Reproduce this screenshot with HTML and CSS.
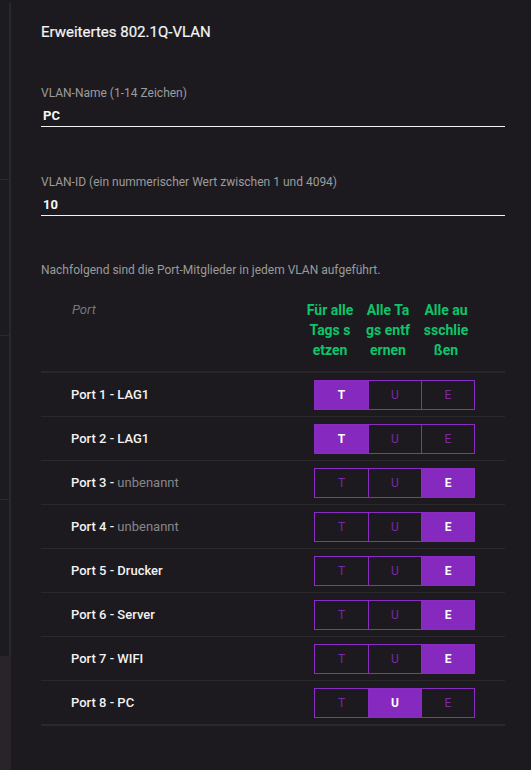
FILE: index.html
```html
<!DOCTYPE html>
<html lang="de">
<head>
<meta charset="utf-8">
<title>Erweitertes 802.1Q-VLAN</title>
<link rel="stylesheet" href="styles.css">
</head>
<body>
<div class="layout">
  <aside class="strip">
    <div class="strip-seg s1"></div>
    <div class="strip-seg s2"></div>
    <div class="strip-seg s3"></div>
    <div class="strip-seg s4"></div>
    <div class="strip-seg s5"></div>
  </aside>
  <main class="panel">
    <h1 class="title">Erweitertes 802.1Q-VLAN</h1>

    <div class="field first">
      <div class="label">VLAN-Name (1-14 Zeichen)</div>
      <div class="value">PC</div>
    </div>

    <div class="field second">
      <div class="label">VLAN-ID (ein nummerischer Wert zwischen 1 und 4094)</div>
      <div class="value">10</div>
    </div>

    <p class="note">Nachfolgend sind die Port-Mitglieder in jedem VLAN aufgeführt.</p>

    <div class="table">
      <div class="thead">
        <div class="th-port">Port</div>
        <div class="th-act">Für alle<br>Tags s<br>etzen</div>
        <div class="th-act">Alle Ta<br>gs entf<br>ernen</div>
        <div class="th-act">Alle au<br>sschlie<br>ßen</div>
      </div>

      <div class="row">
        <div class="pname">Port 1 - LAG1</div>
        <div class="seg"><span class="opt on">T</span><span class="opt">U</span><span class="opt">E</span></div>
      </div>
      <div class="row">
        <div class="pname">Port 2 - LAG1</div>
        <div class="seg"><span class="opt on">T</span><span class="opt">U</span><span class="opt">E</span></div>
      </div>
      <div class="row">
        <div class="pname">Port 3 - <span class="unnamed">unbenannt</span></div>
        <div class="seg"><span class="opt">T</span><span class="opt">U</span><span class="opt on">E</span></div>
      </div>
      <div class="row">
        <div class="pname">Port 4 - <span class="unnamed">unbenannt</span></div>
        <div class="seg"><span class="opt">T</span><span class="opt">U</span><span class="opt on">E</span></div>
      </div>
      <div class="row">
        <div class="pname">Port 5 - Drucker</div>
        <div class="seg"><span class="opt">T</span><span class="opt">U</span><span class="opt on">E</span></div>
      </div>
      <div class="row">
        <div class="pname">Port 6 - Server</div>
        <div class="seg"><span class="opt">T</span><span class="opt">U</span><span class="opt on">E</span></div>
      </div>
      <div class="row">
        <div class="pname">Port 7 - WIFI</div>
        <div class="seg"><span class="opt">T</span><span class="opt">U</span><span class="opt on">E</span></div>
      </div>
      <div class="row">
        <div class="pname">Port 8 - PC</div>
        <div class="seg"><span class="opt">T</span><span class="opt on">U</span><span class="opt">E</span></div>
      </div>
    </div>
  </main>
</div>
</body>
</html>
```

FILE: styles.css
```css
* { box-sizing: border-box; }

html, body {
  margin: 0;
  padding: 0;
  background: #1c1a1f;
  height: 100%;
}

body {
  font-family: Roboto, "Liberation Sans", Arial, sans-serif;
  color: #f2f2f2;
  overflow: hidden;
}

.layout {
  display: flex;
  height: 770px;
}

.strip {
  width: 9px;
  flex: none;
  display: flex;
  flex-direction: column;
  background: #1c1b1f;
}

.strip-seg { flex: none; }
.s1 { height: 180px; border-bottom: 1px solid #2c2a30; }
.s2 { height: 156px; border-bottom: 1px solid #2c2a30; }
.s3 { height: 164px; border-bottom: 1px solid #2c2a30; }
.s4 { height: 156px; }
.s5 { flex: 1; background: #28242a; margin-right: -2px; position: relative; z-index: 1; }

.panel {
  flex: 1;
  margin-top: 3px;
  border-left: 2px solid #2a282d;
  background: #1c1a1f;
  padding: 19px 26px 0 30px;
}

.title {
  margin: 0;
  font-size: 15px;
  line-height: 20px;
  font-weight: 400;
  color: #f4f4f4;
  -webkit-text-stroke: 0.2px #f4f4f4;
}

.field { display: flex; flex-direction: column; }
.field.first { margin-top: 43px; }
.field.second { margin-top: 47px; }

.label {
  font-size: 12px;
  line-height: 16px;
  color: #9c9c9c;
}

.value {
  margin-top: 6px;
  padding: 0 0 1px 2px;
  font-size: 13px;
  line-height: 18px;
  font-weight: 700;
  color: #f6f6f6;
  border-bottom: 1px solid #f2f2f2;
}

.note {
  margin: 46px 0 0 0;
  font-size: 12px;
  line-height: 16px;
  color: #9a9a9a;
}

.table { margin-top: 22px; }

.thead {
  display: flex;
  align-items: flex-start;
  padding: 0 34px 11px 31px;
  border-bottom: 2px solid #28262b;
}

.th-port {
  flex: 1;
  font-size: 13px;
  line-height: 20px;
  font-style: italic;
  color: #77767a;
}

.th-act {
  width: 50px;
  margin-left: 8px;
  text-align: center;
  white-space: nowrap;
  font-size: 14px;
  line-height: 20px;
  font-weight: 700;
  color: #0ec46a;
}

.row {
  display: flex;
  align-items: center;
  height: 44px;
  padding: 0 30px 0 30px;
  border-bottom: 1px solid #2a282d;
}

.row:last-child { border-bottom-width: 2px; height: 45px; }

.pname {
  flex: 1;
  font-size: 13px;
  font-weight: 500;
  color: #f2f2f2;
}

.unnamed {
  font-weight: 400;
  color: #87868a;
}

.seg {
  display: flex;
  height: 30px;
  border: 1px solid #8a2bc3;
}

.opt {
  width: 53px;
  display: flex;
  align-items: center;
  justify-content: center;
  font-size: 12px;
  color: #7a2aa6;
}

.opt + .opt { border-left: 1px solid #8a2bc3; }

.opt.on {
  background: #8629bf;
  color: #ffffff;
  font-weight: 700;
}
```
